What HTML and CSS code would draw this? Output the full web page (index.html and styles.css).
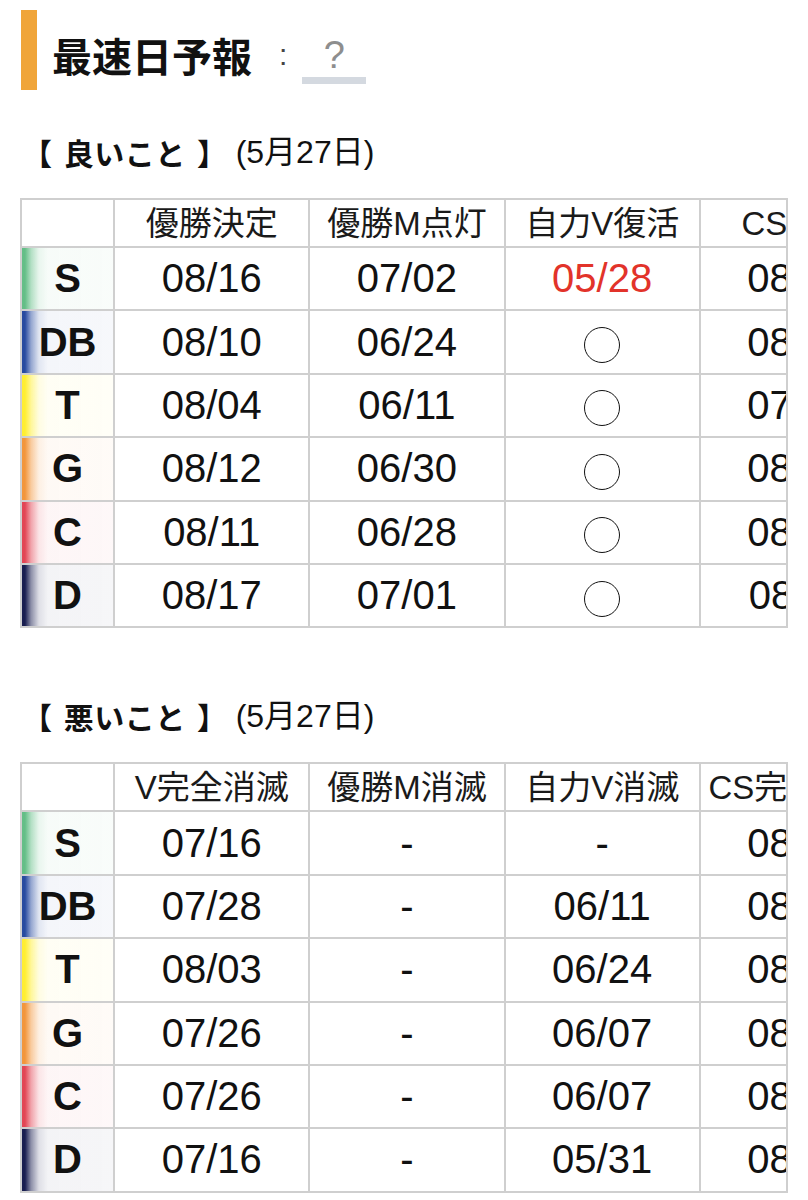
FILE: index.html
```html
<!DOCTYPE html>
<html lang="ja">
<head>
<meta charset="utf-8">
<title>最速日予報</title>
<link rel="stylesheet" href="styles.css">
</head>
<body>
<div class="page">
  <h1 class="title">
    <span class="title-bar"></span>
    <span class="title-text">最速日予報</span>
    <span class="title-colon">:</span>
    <span class="title-q">?</span>
  </h1>

  <section class="block block-good">
    <h2 class="sub"><span class="sub-title">【 良いこと 】</span><span class="sub-date">(5月27日)</span></h2>
    <div class="table-wrap">
      <table class="grid">
        <colgroup><col class="c-team"><col class="c-val"><col class="c-val"><col class="c-val"><col class="c-val"></colgroup>
        <thead>
          <tr><th></th><th>優勝決定</th><th>優勝M点灯</th><th>自力V復活</th><th>CS確定</th></tr>
        </thead>
        <tbody>
          <tr><th class="team t-s">S</th><td>08/16</td><td>07/02</td><td class="hot">05/28</td><td>08/21</td></tr>
          <tr><th class="team t-db">DB</th><td>08/10</td><td>06/24</td><td><span class="maru"></span></td><td>08/14</td></tr>
          <tr><th class="team t-t">T</th><td>08/04</td><td>06/11</td><td><span class="maru"></span></td><td>07/29</td></tr>
          <tr><th class="team t-g">G</th><td>08/12</td><td>06/30</td><td><span class="maru"></span></td><td>08/06</td></tr>
          <tr><th class="team t-c">C</th><td>08/11</td><td>06/28</td><td><span class="maru"></span></td><td>08/05</td></tr>
          <tr><th class="team t-d">D</th><td>08/17</td><td>07/01</td><td><span class="maru"></span></td><td>08/11</td></tr>
        </tbody>
      </table>
    </div>
  </section>

  <section class="block block-bad">
    <h2 class="sub"><span class="sub-title">【 悪いこと 】</span><span class="sub-date">(5月27日)</span></h2>
    <div class="table-wrap">
      <table class="grid">
        <colgroup><col class="c-team"><col class="c-val"><col class="c-val"><col class="c-val"><col class="c-val"></colgroup>
        <thead>
          <tr><th></th><th>V完全消滅</th><th>優勝M消滅</th><th>自力V消滅</th><th>CS完全消滅</th></tr>
        </thead>
        <tbody>
          <tr><th class="team t-s">S</th><td>07/16</td><td>-</td><td>-</td><td>08/30</td></tr>
          <tr><th class="team t-db">DB</th><td>07/28</td><td>-</td><td>06/11</td><td>08/25</td></tr>
          <tr><th class="team t-t">T</th><td>08/03</td><td>-</td><td>06/24</td><td>08/29</td></tr>
          <tr><th class="team t-g">G</th><td>07/26</td><td>-</td><td>06/07</td><td>08/22</td></tr>
          <tr><th class="team t-c">C</th><td>07/26</td><td>-</td><td>06/07</td><td>08/21</td></tr>
          <tr><th class="team t-d">D</th><td>07/16</td><td>-</td><td>05/31</td><td>08/18</td></tr>
        </tbody>
      </table>
    </div>
  </section>
</div>
</body>
</html>
```

FILE: styles.css
```css
html, body {
  margin: 0;
  padding: 0;
  background: #ffffff;
}

body {
  font-family: "Liberation Sans", "Noto Sans CJK JP", sans-serif;
  color: #111111;
}

.page {
  width: 808px;
  padding-top: 10px;
}

/* ---------- title ---------- */
.title {
  display: flex;
  align-items: center;
  margin: 0 0 0 21px;
  height: 80px;
  font-weight: 700;
}

.title-bar {
  width: 16px;
  height: 80px;
  background: #f0a53a;
  flex: none;
}

.title-text {
  margin-left: 15px;
  font-size: 40px;
  line-height: 48px;
  font-family: "Noto Sans CJK JP", sans-serif;
  font-weight: 700;
  color: #111111;
  padding-top: 10px;
}

.title-colon {
  margin-left: 27px;
  font-size: 30px;
  font-weight: 400;
  color: #444444;
  padding-top: 10px;
}

.title-q {
  margin-left: 15px;
  width: 64px;
  text-align: center;
  font-size: 38px;
  line-height: 44px;
  font-weight: 400;
  color: #8e8e8e;
  border-bottom: 7px solid #d4d9e0;
  padding-top: 16px;
}

/* ---------- sub headings ---------- */
.block-good {
  margin-top: 42px;
}

.block-bad {
  margin-top: 68px;
}

.sub {
  margin: 0 0 0 22px;
  height: 40px;
  display: flex;
  align-items: center;
  white-space: nowrap;
}

.sub-title {
  font-family: "Noto Sans CJK JP", sans-serif;
  font-size: 30px;
  font-weight: 700;
  line-height: 40px;
  letter-spacing: 0.5px;
  word-spacing: 4px;
}

.sub-date {
  margin-left: 8px;
  font-size: 32px;
  font-weight: 400;
  line-height: 40px;
}

/* ---------- tables ---------- */
.table-wrap {
  margin: 26px 0 0 20px;
  width: 766px;
  overflow: hidden;
  border-right: 2px solid #cfcfcf;
}

.grid {
  border-collapse: collapse;
  table-layout: fixed;
  width: 876px;
}

.c-team { width: 93px; }
.c-val { width: 195px; }

.grid th,
.grid td {
  border: 2px solid #cfcfcf;
  padding: 0;
  text-align: center;
  vertical-align: middle;
  white-space: nowrap;
  overflow: hidden;
}

.grid thead th {
  height: 44px;
  font-size: 33px;
  font-weight: 400;
  color: #1a1a1a;
  line-height: 44px;
  padding-top: 2px;
}

.grid tbody tr {
  height: 63.4px;
}

.grid td {
  font-size: 40px;
  color: #111111;
}

.grid td.hot {
  color: #e2332a;
}

.maru {
  display: inline-block;
  width: 34px;
  height: 34px;
  border: 1.5px solid #111111;
  border-radius: 50%;
  vertical-align: middle;
}

/* ---------- team cells ---------- */
.grid th.team {
  font-size: 40px;
  font-weight: 700;
  color: #111111;
  background: linear-gradient(90deg,
    rgb(var(--c)) 0,
    rgb(var(--c)) 3px,
    rgba(var(--c), 0.5) 9px,
    rgba(var(--c), 0.14) 17px,
    rgba(var(--c), 0.05) 26px,
    rgba(var(--c), 0.04) 100%);
}

.t-s  { --c: 100, 190, 135; }
.t-db { --c: 40, 75, 160; }
.t-t  { --c: 255, 238, 50; }
.t-g  { --c: 242, 150, 60; }
.t-c  { --c: 226, 70, 85; }
.t-d  { --c: 25, 30, 80; }
```
